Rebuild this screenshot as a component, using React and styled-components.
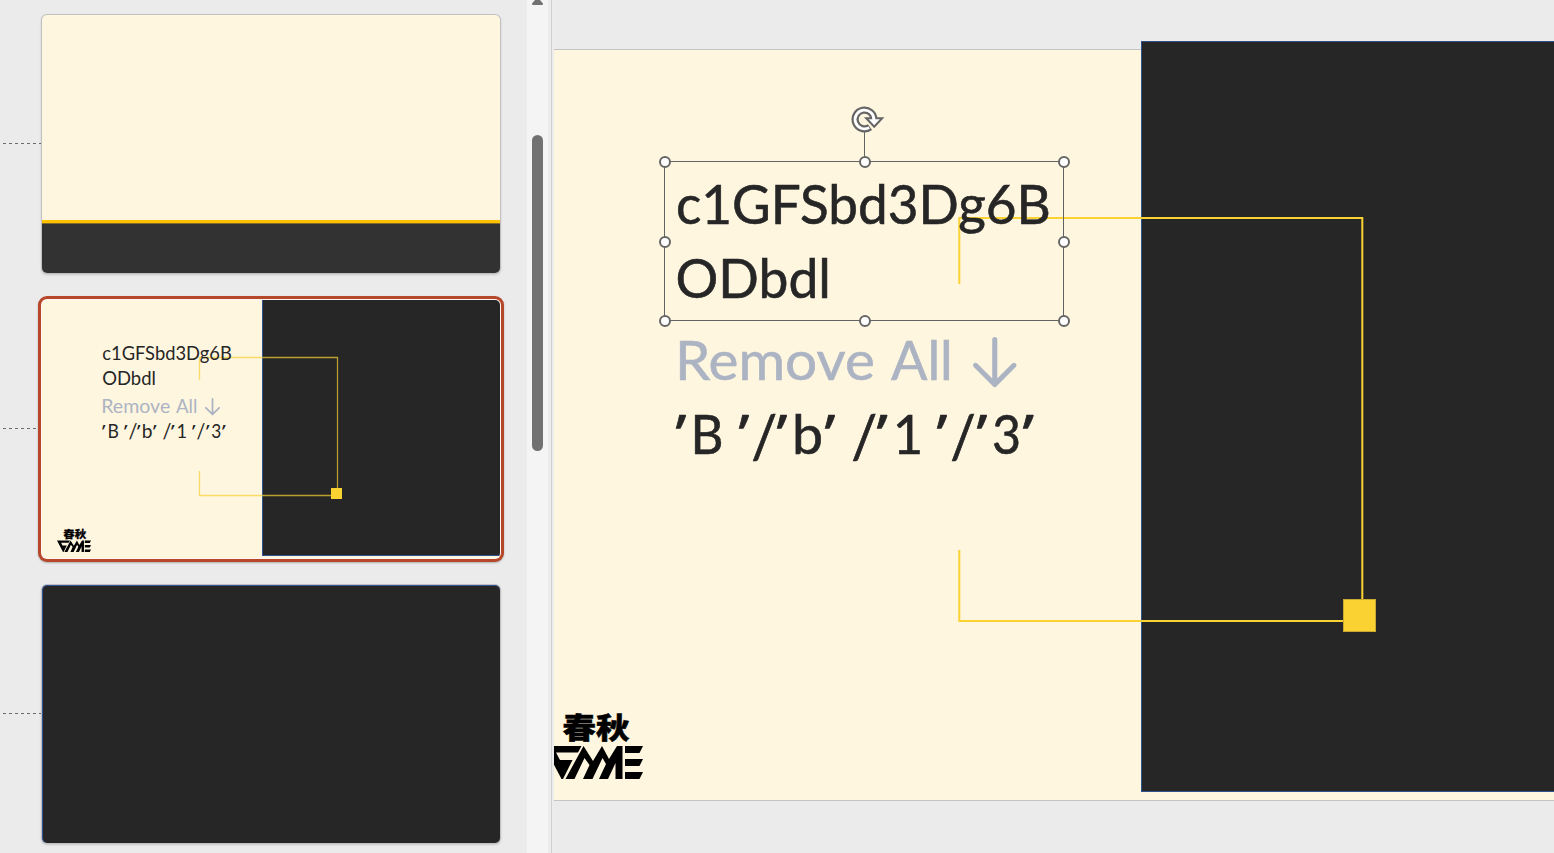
import React, { useMemo } from 'react';
import styled, { createGlobalStyle, css } from 'styled-components';

const CREAM = '#fff6e0';
const INK = '#262626';
const MUTED = '#acb4c3';
const YELLOW = '#fad232';
const BLUE = '#2f5290';
const FAMILY = '"Lato", "Liberation Sans", sans-serif';
const QUOTE_FAMILY = '"Open Sans", "Noto Sans", sans-serif';

const GlobalStyle = createGlobalStyle`
  * { box-sizing: border-box; }
  body { margin: 0; overflow: hidden; background: #ebebeb; font-family: ${FAMILY}; }
`;

const Window = styled.div`
  display: flex;
  width: 100vw;
  height: 100vh;
  overflow: hidden;
`;

const Sidebar = styled.aside`
  display: flex;
  flex-direction: column;
  gap: 27px;
  width: 527px;
  padding: 15px 27px 0 3px;
  flex: none;
`;

const SlideRow = styled.div`
  display: flex;
  align-items: flex-start;
  height: 258px;
  flex: none;
`;

const Connector = styled.div`
  width: ${p => (p.$short ? 34 : 38)}px;
  margin-right: ${p => (p.$short ? 5 : 1)}px;
  height: 1px;
  margin-top: 128px;
  background: repeating-linear-gradient(90deg, #6c6c6c 0 3px, transparent 3px 6px);
`;

const Thumb = styled.div`
  position: relative;
  display: flex;
  flex-direction: column;
  justify-content: flex-end;
  width: 458px;
  height: 258px;
  overflow: hidden;
  border-radius: 5px;
  background: ${p => (p.$dark ? INK : CREAM)};
  box-shadow: 0 0 0 1px #c2c0c2, 0 1px 2px 1px rgba(0, 0, 0, 0.15);
  ${p => p.$selected && css`
    box-shadow: 0 0 0 1px #fdf6ee, 0 0 0 4px #b7472a, 0 1px 2px 4px rgba(0, 0, 0, 0.25);
  `}
  ${p => p.$dark && css`
    border-left: 1px solid ${BLUE};
    border-top: 1px solid ${BLUE};
  `}
`;

const FooterBand = styled.div`
  height: 53px;
  border-top: 3px solid #ffc000;
  background: #323232;
  box-shadow: inset 0 1px 0 #806a2a;
`;

const Scrollbar = styled.div`
  display: flex;
  flex-direction: column;
  align-items: center;
  width: 21px;
  background: #f4f4f4;
  flex: none;
`;

const ScrollArrow = styled.svg`
  display: block;
  width: 11px;
  height: 5px;
`;

const ScrollHandle = styled.div`
  width: 11px;
  height: 316px;
  margin-top: 130px;
  border-radius: 5.5px;
  background: #717171;
`;

const Splitter = styled.div`
  width: 6px;
  border-left: 3px solid #ebebeb;
  border-right: 2px solid #ececec;
  background: #d0d0d0;
  flex: none;
`;

const Workspace = styled.main`
  flex: 1;
  padding-top: 49px;
  overflow: hidden;
`;

const Slide = styled.section`
  position: relative;
  height: 752px;
  border-top: 1px solid #c4c4c4;
  border-bottom: 1px solid #c4c4c4;
  background: ${CREAM};
`;

const Layer = styled.svg`
  position: absolute;
  left: ${p => p.$x}px;
  top: ${p => p.$y}px;
  width: ${p => p.$w}px;
  height: ${p => p.$h}px;
  overflow: visible;
`;

const DarkPanel = styled.div`
  position: absolute;
  left: ${p => p.$x}px;
  top: ${p => p.$y}px;
  right: 0;
  height: ${p => p.$h}px;
  background: ${INK};
  border: 1px solid ${BLUE};
  border-right: 0;
  ${p => p.$thumb && 'border-top: 0;'}
`;

const TextBox = styled.div`
  position: absolute;
  left: ${p => p.$x}px;
  top: ${p => p.$y}px;
  font-size: ${p => p.$size}px;
  line-height: ${p => p.$line}px;
  color: ${INK};
  white-space: pre;
  -webkit-text-stroke: ${p => (p.$size > 30 ? '0.6px' : '0')} currentColor;
`;

const Line = styled.div`
  display: flex;
  color: ${p => (p.$muted ? MUTED : INK)};
`;

const WordSlot = styled.span`
  display: block;
  width: ${p => p.$w}em;
  margin-left: ${p => p.$gap}em;
  flex: none;
`;

const WordInk = styled.span`
  display: inline-block;
  transform-origin: 0 50%;
  font-family: ${p => (p.$quote ? QUOTE_FAMILY : FAMILY)};
`;

const DownArrow = styled.svg`
  width: ${p => p.$w}em;
  height: 0.93em;
  margin: 0.27em 0 0 0.445em;
  flex: none;
  overflow: visible;
`;

const EM = 54.4;

// Condenses a word so that its ink fills exactly the given width.
function Word({ text, from, to, prev }) {
  const quote = text.startsWith('’');
  const slash = text === '/';
  const fit = useMemo(() => {
    const ctx = document.createElement('canvas').getContext('2d');
    ctx.font = `200px ${quote ? QUOTE_FAMILY : FAMILY}`;
    const m = ctx.measureText(text.trim());
    const left = -m.actualBoundingBoxLeft / 200;
    const ink = (m.actualBoundingBoxRight + m.actualBoundingBoxLeft) / 200;
    const s = (to - from) / EM / ink;
    return { left: left * s, s };
  }, [text, from, to, quote]);
  return (
    <WordSlot $w={(to - from) / EM} $gap={(from - prev) / EM}>
      <WordInk
        $quote={quote}
        style={{ transform: `translate(${-fit.left}em, ${slash ? 0.03 : 0}em) scale(${fit.s}, ${slash ? 1.12 : 1})` }}
      >
        {text}
      </WordInk>
    </WordSlot>
  );
}

function Words({ items, muted, children }) {
  return (
    <Line $muted={muted}>
      {items.map(([text, from, to], i) => (
        <Word key={i} text={text} from={from} to={to} prev={i ? items[i - 1][2] : 0} />
      ))}
      {children}
    </Line>
  );
}

function TitleText(props) {
  return (
    <TextBox {...props}>
      <Words items={[['c1GFSbd3Dg6B', 1.8, 372.3]]} />
      <Words items={[['ODbdl', 1.8, 151]]} />
    </TextBox>
  );
}

function BodyText(props) {
  return (
    <TextBox {...props}>
      <Words muted items={[['Remove ', 4, 196.7], ['All ', 215, 273]]}>
        <DownArrow $w={0.8} viewBox="0 0 43 50" preserveAspectRatio="none">
          <path d="M21.5 2.5V47M2.5 28L21.5 47L40.5 28" fill="none" stroke={MUTED} strokeWidth="5" strokeLinecap="round" strokeLinejoin="round" />
        </DownArrow>
      </Words>
      <Words
        items={[
          ['’', 0, 10], ['B ', 19, 45],
          ['’', 62.7, 72.7], ['/', 77.3, 99.7], ['’', 101.3, 111.3], ['b', 120, 145], ['’ ', 149, 159],
          ['/', 177.3, 199.7], ['’', 201.3, 211.7], ['1 ', 220.7, 243.3],
          ['’', 261.3, 271.3], ['/', 276.3, 298.3], ['’', 300.7, 310.7], ['3', 318, 342.3], ['’', 346.7, 357.3],
        ]}
      />
    </TextBox>
  );
}

const LogoText = styled.text`
  font-family: "Noto Sans CJK SC", sans-serif;
  font-weight: 900;
  font-size: 29px;
  fill: #000;
  stroke: #000;
  stroke-width: 0.5px;
`;

function Logo({ x, y, w, h }) {
  return (
    <Layer $x={x} $y={y} $w={w} $h={h} viewBox="0 0 99 66" preserveAspectRatio="none">
      <LogoText x="18.5" y="26" textLength="67" lengthAdjust="spacingAndGlyphs">春秋</LogoText>
      <g fill="#000">
        <polygon points="0,33 37.5,33 34,39.5 12,39.5 16,47 28.5,47 19,66 17.5,66" />
        <polygon points="21.5,66 39.5,33 49,48 58,33 65,46 73,33 78.5,33 78.5,66 71.5,66 71.5,50 64,66 55,66 62,51 58.5,45 48.5,66 39,66 45.5,52 40.5,45 30.5,66" />
        <polygon points="81,33 99,33 95.5,40 81,40" />
        <polygon points="81,46 99,46 95.5,53 81,53" />
        <polygon points="81,59 99,59 95.5,66 81,66" />
      </g>
    </Layer>
  );
}

const Frame = styled.div`
  position: absolute;
  left: 110px;
  top: 111px;
  width: 400px;
  height: 160px;
  border: 1px solid #636363;
`;

const Handle = styled.span`
  position: absolute;
  left: ${p => p.$x - 6}px;
  top: ${p => p.$y - 6}px;
  width: 12px;
  height: 12px;
  border: 2px solid #666;
  border-radius: 50%;
  background: #fff;
`;

const HANDLES = [
  [0, 0], [200, 0], [399, 0],
  [0, 80], [399, 80],
  [0, 159], [200, 159], [399, 159],
];

function Selection() {
  return (
    <>
      <Frame>
        {HANDLES.map(([x, y]) => <Handle key={`${x}-${y}`} $x={x} $y={y} />)}
      </Frame>
      <Layer $x={296} $y={55} $w={36} $h={56} viewBox="0 0 36 56">
        <path d="M14.5 27V51" stroke="#636363" />
        <path d="M20 22.1A9.4 9.4 0 1 1 23.9 14.5" fill="none" stroke="#666" strokeWidth="7.2" />
        <path d="M16.2 13.2H32.2L24.2 21.8Z" fill="#fff" stroke="#666" strokeWidth="2" />
        <path d="M19.2 22.6A9.4 9.4 0 1 1 23.9 15" fill="none" stroke="#fff" strokeWidth="2.8" />
      </Layer>
    </>
  );
}

export default function App() {
  return (
    <>
      <GlobalStyle />
      <Window>
        <Sidebar>
          <SlideRow>
            <Connector />
            <Thumb><FooterBand /></Thumb>
          </SlideRow>
          <SlideRow>
            <Connector $short />
            <Thumb $selected>
              <DarkPanel $thumb $x={220} $y={0} $h={256} />
              <Layer $x={0} $y={0} $w={458} $h={258} viewBox="0 0 458 258">
                <g fill="none" stroke={YELLOW} strokeOpacity="0.7" strokeWidth="1.3">
                  <path d="M157.5 80V57.5H295.5V189" />
                  <path d="M157.5 171V195.5H289" />
                </g>
                <rect x="289" y="188" width="11" height="11" fill={YELLOW} />
              </Layer>
              <TitleText $x={60} $y={40} $size={18.8} $line={25} />
              <BodyText $x={60} $y={93} $size={18.8} $line={25} />
              <Logo x={15} y={228.5} w={34} h={23} />
            </Thumb>
          </SlideRow>
          <SlideRow>
            <Connector />
            <Thumb $dark />
          </SlideRow>
        </Sidebar>
        <Scrollbar>
          <ScrollArrow viewBox="0 0 11 5">
            <path d="M3 0H8L11 3.5Q11 5 10 5H1Q0 5 0 3.5Z" fill="#717171" />
          </ScrollArrow>
          <ScrollHandle />
        </Scrollbar>
        <Splitter />
        <Workspace>
          <Slide>
            <DarkPanel $x={587} $y={-9} $h={751} />
            <Layer $x={0} $y={0} $w={1000} $h={750} viewBox="0 0 1000 750">
              <g fill="none" stroke={YELLOW} strokeWidth="2">
                <path d="M405.3 234V168H808.3V550" />
                <path d="M405.3 500V571H790" />
              </g>
              <rect x="789.5" y="549.5" width="32" height="32" fill={YELLOW} stroke="#c9aa30" />
            </Layer>
            <TitleText $x={122} $y={116} $size={EM} $line={74} />
            <BodyText $x={122} $y={272} $size={EM} $line={74} />
            <Selection />
            <Logo x={-10} y={663} w={99} h={66} />
          </Slide>
        </Workspace>
      </Window>
    </>
  );
}
